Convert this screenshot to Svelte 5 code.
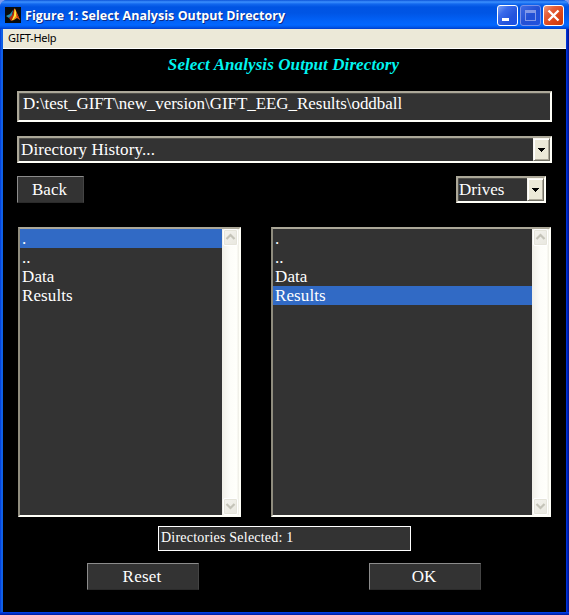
<script>
  const folders = ['.', '..', 'Data', 'Results'];
  const panes = [
    { side: 'left', selected: 0 },
    { side: 'right', selected: 3 }
  ];
</script>

{#snippet chevron(down)}
  <span class="scroll-btn">
    <svg width="15" height="16" viewBox="0 0 15 16">
      <path d={down ? 'M3.5 6 L7.5 10 L11.5 6' : 'M3.5 10 L7.5 6 L11.5 10'} fill="none" stroke="#c4c3b8" stroke-width="2.2" />
    </svg>
  </span>
{/snippet}

{#snippet arrow()}
  <span class="drop">
    <svg width="7" height="4" viewBox="0 0 7 4" shape-rendering="crispEdges"><path d="M0 0H7V1H6V2H5V3H4V4H3V3H2V2H1V1H0Z" fill="#000" /></svg>
  </span>
{/snippet}

<div class="window">
  <header>
    <svg class="logo" width="16" height="16" viewBox="0 0 16 16">
      <rect width="16" height="16" fill="#080b0c" />
      <path d="M1 9 L5 7 L8 3 L7 9 L4 11Z" fill="#2790ad" />
      <path d="M4 11 L7 8 L9 2 L10 1.5 L9 9 L6 14Z" fill="#b52b12" />
      <path d="M9 2 L10 1.5 L12 6 L15 13 L12 11 L9 13 L6 14 L9 9Z" fill="#f08018" />
      <path d="M10 2 L11 5 L11 9 L8 13 L7 13 L9 8Z" fill="#ffe83b" />
      <path d="M11 5 L15 13 L12 10Z" fill="#c52d12" />
    </svg>
    <span class="caption">Figure 1: Select Analysis Output Directory</span>
    <div class="controls">
      <span class="ctl"><svg width="21" height="21" viewBox="0 0 21 21"><rect x="5" y="13" width="7" height="3" fill="#fff" /></svg></span>
      <span class="ctl off"><svg width="21" height="21" viewBox="0 0 21 21" shape-rendering="crispEdges"><path d="M5 5H16V16H5Z M6 8V15H15V8Z" fill="#8298e8" fill-rule="evenodd" /></svg></span>
      <span class="ctl close"><svg width="21" height="21" viewBox="0 0 21 21"><path d="M5.5 5.5L15.5 15.5M15.5 5.5L5.5 15.5" stroke="#fff" stroke-width="2.4" /></svg></span>
    </div>
  </header>
  <nav><span>GIFT-Help</span></nav>
  <main>
    <h1><span>Select Analysis Output Directory</span></h1>
    <div class="field path"><span>D:\test_GIFT\new_version\GIFT_EEG_Results\oddball</span></div>
    <div class="field combo history"><span>Directory History...</span>{@render arrow()}</div>
    <div class="row tools">
      <div class="button back"><span>Back</span></div>
      <div class="field combo drives"><span>Drives</span>{@render arrow()}</div>
    </div>
    <div class="row panes">
      {#each panes as pane}
        <div class="list {pane.side}">
          <ul>
            {#each folders as name, i}
              <li class:selected={i === pane.selected}><span>{name}</span></li>
            {/each}
          </ul>
          <div class="scroll">{@render chevron(false)}{@render chevron(true)}</div>
        </div>
      {/each}
    </div>
    <div class="status"><span>Directories Selected: 1</span></div>
    <div class="row actions">
      <div class="button reset"><span>Reset</span></div>
      <div class="button ok"><span>OK</span></div>
    </div>
  </main>
</div>

<style>
  :global(body) { margin: 0; background: #7c9cf0; overflow: hidden; }
  .window, .window * { box-sizing: border-box; }
  .window {
    width: 569px; height: 615px; display: flex; flex-direction: column;
    background: linear-gradient(90deg, #0831d9 0, #0855dd 1px, #166aee 2px, #0855dd 3px, #0040e8 565px, #0040e8 566px, #0028c8 567px, #00138c 569px);
    border-radius: 7px 7px 0 0; overflow: hidden;
    font-family: "Liberation Serif", serif; font-size: 17px; color: #fff; white-space: nowrap;
  }
  svg { display: block; }
  header {
    height: 29px; flex: none; display: flex; align-items: center; padding: 1px 5px 0 5px;
    background: linear-gradient(#0b53d8 0, #3c91ff 2px, #1268ee 4px, #0054e3 7px, #0055e5 13px, #0262f8 21px, #0267ff 25px, #0058ea 27px, #003dcc 29px);
  }
  .caption {
    margin-left: 4px; font: bold 12.5px/20px "Open Sans", sans-serif; letter-spacing: 0.04px;
    text-shadow: 1px 1px 0 #0b2b87; padding-top: 2px;
  }
  .controls { margin-left: auto; display: flex; gap: 2px; padding-top: 1px; }
  .ctl {
    width: 21px; height: 21px; border: 1px solid #fff; border-radius: 3px;
    background: linear-gradient(135deg, #7da2f5 0, #3a6aea 30%, #2454dc 65%, #1b50e8 100%);
  }
  .ctl svg { margin: -1px; }
  .off { border-color: #7890e8; background: linear-gradient(135deg, #3f6be4, #2350d5 50%, #2052df); }
  .close { background: linear-gradient(135deg, #f09a80 0, #e5603a 30%, #dc4519 65%, #c93808 100%); }
  nav {
    height: 20px; flex: none; margin: 0 3px; padding-left: 5px; background: #ece9d8; border-bottom: 1px solid #fff;
    color: #000; font: 11px/18px "Noto Sans", sans-serif; letter-spacing: -0.25px;
  }
  main { height: 563px; margin: 0 3px; background: #000; padding: 0 14px; display: flex; flex-direction: column; }
  .window::after { content: ""; height: 3px; background: linear-gradient(#0046f0 0, #0036d8 1px, #001a96 3px); }
  h1 { margin: 0; height: 42px; padding: 5px 2px 0 0; text-align: center; font: italic bold 17px/22px "Liberation Serif", serif; letter-spacing: 0.09px; color: #00f4f0; }
  .field { background: #333; border: 2px solid; border-color: #aca899 #fffff8 #fffff8 #aca899; box-shadow: inset 1px 1px 0 -0.5px #716f64; }
  .path { height: 31px; width: 535px; padding-left: 4px; line-height: 21px; letter-spacing: -0.05px; }
  .combo { display: flex; justify-content: space-between; padding-left: 2px; line-height: 24px; }
  .history { width: 535px; height: 27px; margin-top: 14px; letter-spacing: 0.1px; }
  .drop {
    width: 17px; height: 23px; display: flex; align-items: center; justify-content: center; background: #ece9d8;
    border: 1px solid; border-color: #f8f6ee #716f64 #716f64 #f8f6ee; box-shadow: inset 1px 1px #fff, inset -1px -1px #aca899;
  }
  .row { display: flex; }
  .tools { margin-top: 13px; height: 27px; justify-content: space-between; }
  .button {
    height: 27px; background: #333; border: 1px solid; border-color: #8c8c8c #444 #2b2b2b #8c8c8c;
    text-align: center; line-height: 25px; padding-right: 2px;
  }
  .back { width: 67px; }
  .drives { width: 90px; margin-right: 6px; padding-left: 1px; }
  .panes { margin: 24px 0 0 1px; gap: 30px; height: 290px; }
  .list { height: 290px; display: flex; background: #333; border: 2px solid; border-color: #aca899 #fffff8 #fffff8 #8f8c7e; }
  .left { width: 223px; }
  .right { width: 280px; }
  ul { list-style: none; margin: 0; padding: 0; flex: 1; letter-spacing: 0.1px; }
  li { height: 19px; line-height: 19px; padding-left: 2px; }
  .selected { background: #316ac5; }
  .scroll {
    width: 17px; display: flex; flex-direction: column; justify-content: space-between; padding: 0 1px;
    background: linear-gradient(90deg, #f0efe8, #fdfdf9 50%, #fffffb 85%, #eeede5);
  }
  .scroll-btn { width: 15px; height: 17px; background: linear-gradient(135deg, #f4f3ee, #e8e7df); border: 1px solid #fff; border-radius: 2px; box-shadow: inset 0 0 0 1px #e5e4da; }
  .scroll-btn svg { margin: -1px; }
  .status { width: 253px; height: 25px; margin: 9px 0 0 141px; background: #333; border: 1px solid #fff; padding-left: 2px; font-size: 14px; line-height: 21px; letter-spacing: 0.22px; }
  .actions { margin: 12px 0 0 70px; gap: 170px; }
  .reset, .ok { width: 112px; }
  .reset { letter-spacing: 0.2px; }
</style>
